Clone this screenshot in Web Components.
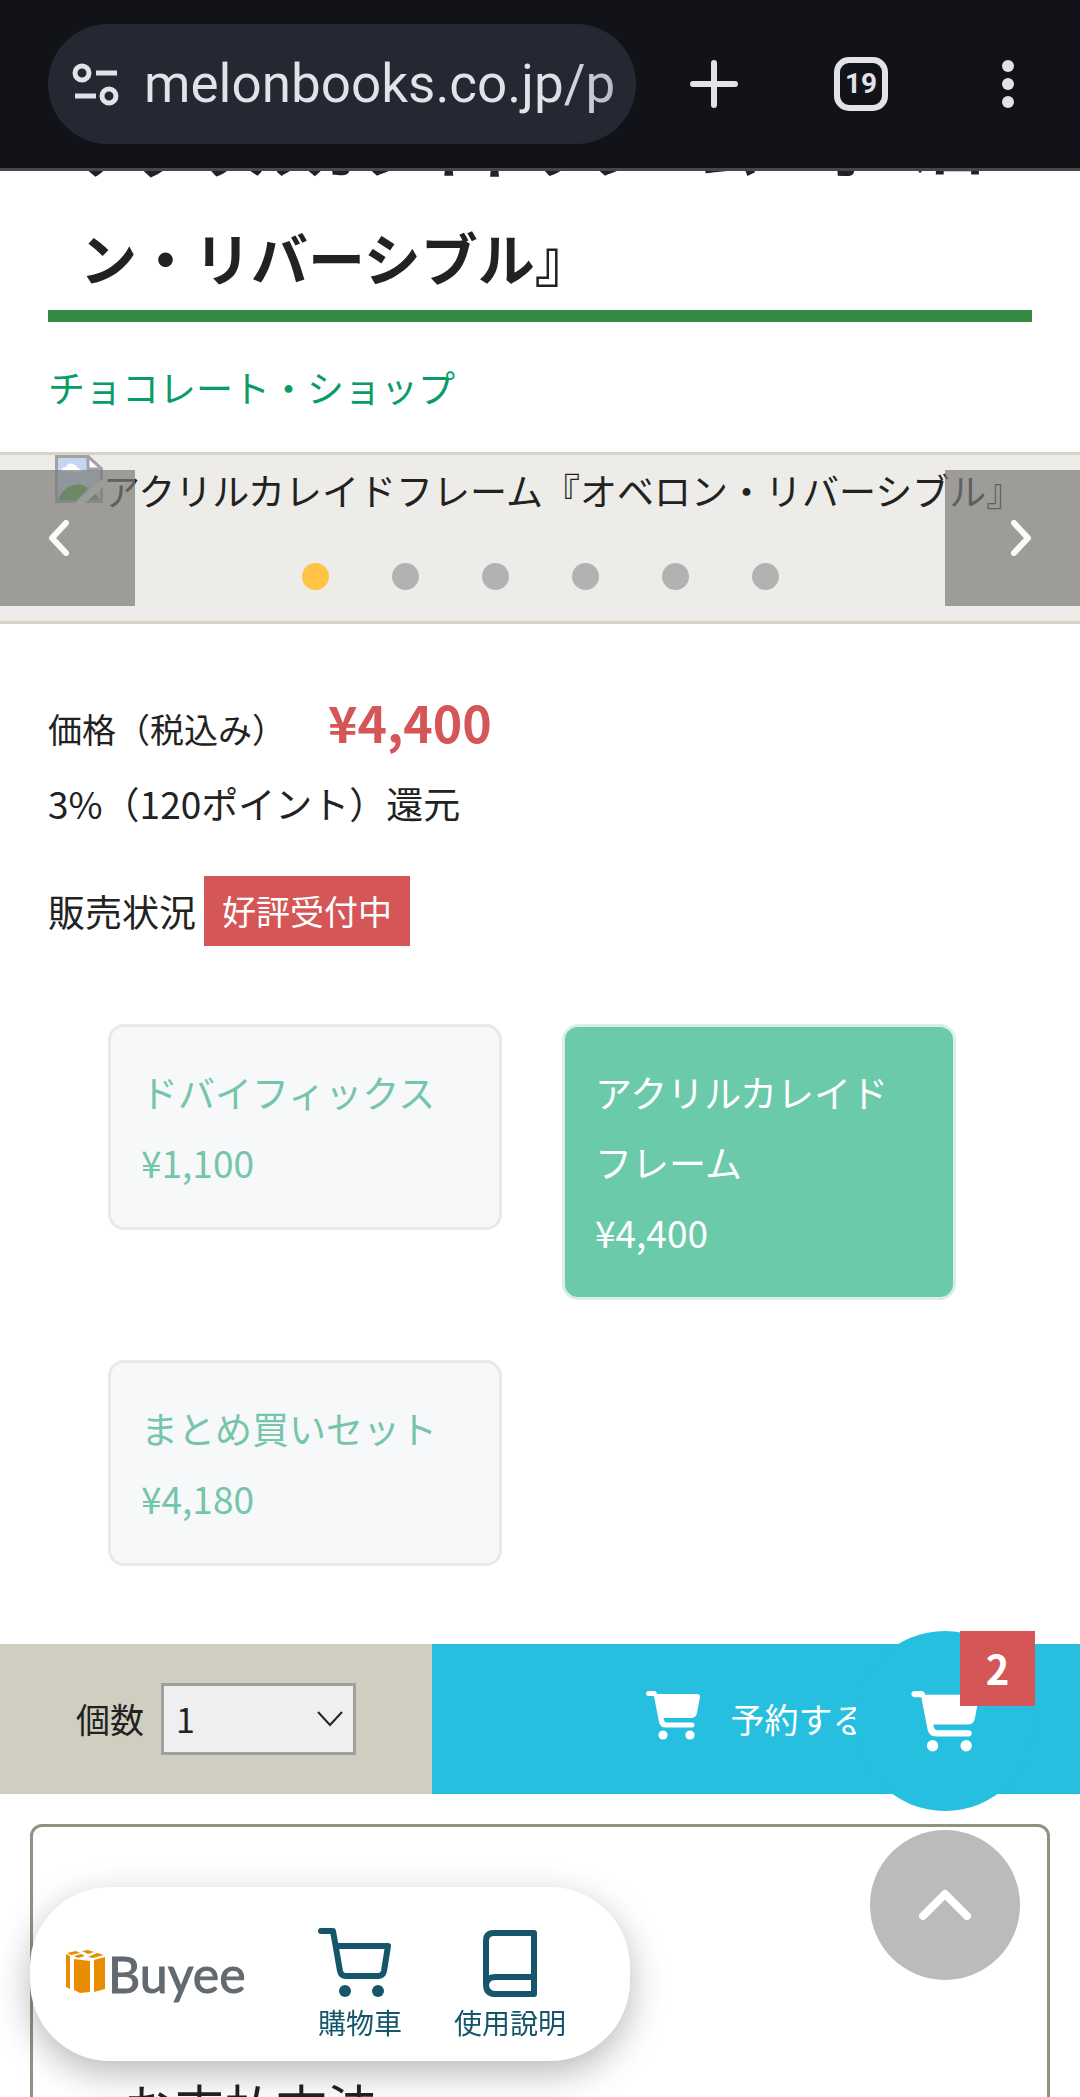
<!DOCTYPE html>
<html lang="ja">
<head>
<meta charset="utf-8">
<meta name="viewport" content="width=device-width, initial-scale=1">
<title>アクリルカレイドフレーム『オベロン・リバーシブル』</title>
<style>
  html, body { margin: 0; height: 100%; }
  body {
    overflow: hidden;
    background: #fff;
    color: #222;
    font: 37px/70px "Noto Sans CJK JP", sans-serif;
  }
</style>
</head>
<body>
<shop-page></shop-page>

<script>
const define = (name, html) => {
  const template = document.createElement('template');
  template.innerHTML = `<style>
    *, *::before, *::after { box-sizing: border-box; }
    :host { display: block; box-sizing: border-box; }
    button, input, select { font: inherit; color: inherit; border: 0; padding: 0; margin: 0; background: none; border-radius: 0; }
    a { color: inherit; text-decoration: none; }
    svg { display: block; flex: none; }
  </style>` + html;
  customElements.define(name, class extends HTMLElement {
    constructor() {
      super();
      this.attachShadow({ mode: 'open' }).append(template.content.cloneNode(true));
    }
  });
};

/* Solid shopping cart, shared by the order button and the floating cart. */
const cartPath = `<path d="M3 0H8Q10.500 0 11 3H51Q54 3 54 6L51 22Q50 27 45 27H17.500L18 29Q18.500 31.500 21 31.500H46Q48.500 31.500 48.500 34T46 36.500H20Q14 36.500 13 31L8 5H3Q0 5 0 2.500T3 0Z"/><circle cx="17" cy="44" r="4.600"/><circle cx="44" cy="44" r="4.600"/>`;

define('browser-bar', `<style>
  :host { position: relative; z-index: 1; background: #121318; border-bottom: 3px solid #45474d; color: #e3e2e9; }
  .bar { display: flex; align-items: center; padding: 24px 36px 24px 48px; }
  .address { flex: 1; min-width: 0; display: flex; align-items: center; gap: 24px; height: 120px; padding: 0 20px 0 24px; border-radius: 60px; background: #242832; }
  input { flex: 1; min-width: 0; width: 0; height: 72px; outline: 0; font: 53px/72px Roboto, "Noto Sans", sans-serif;
    color: transparent; background: linear-gradient(90deg, #e3e2e9 86%, #b9b9c3) text; -webkit-background-clip: text; }
  .tools { display: flex; align-items: center; margin-left: 42px; gap: 75px; }
  button { display: grid; place-items: center; width: 72px; height: 72px; }
  .count { width: 54px; height: 54px; border: 6px solid #e3e2e9; border-radius: 15px; display: grid; place-items: center; font: 700 28px/32px Roboto, sans-serif; }
</style>
<header class="bar">
  <div class="address">
    <svg width="48" height="48" viewBox="0 0 48 48" fill="none" stroke="#e3e2e9" stroke-width="5"><circle cx="10" cy="13" r="7"/><path d="M24 13H45M3 36H24"/><circle cx="37" cy="36" r="7"/></svg>
    <input type="text" aria-label="URL" value="melonbooks.co.jp/p" readonly>
  </div>
  <div class="tools">
    <button aria-label="new tab"><svg width="48" height="48" fill="none" stroke="#e3e2e9" stroke-width="6" stroke-linecap="round"><path d="M24 3V45M3 24H45"/></svg></button>
    <button aria-label="tabs"><span class="count">19</span></button>
    <button aria-label="menu"><svg width="12" height="48" fill="#e3e2e9"><circle cx="6" cy="6" r="6"/><circle cx="6" cy="24" r="6"/><circle cx="6" cy="42" r="6"/></svg></button>
  </div>
</header>`);

define('product-title', `<style>
  :host { padding: 0 48px; margin-top: -77px; }
  h1 { margin: 0; padding: 0 32px; border-bottom: 12px solid #348a43; font-size: 57px; line-height: 108px; font-weight: 700; }
  a { display: block; margin: 30px 0; color: #0a9c67; }
</style>
<h1><slot></slot></h1>
<a href="#circle"><slot name="circle"></slot></a>`);

define('image-carousel', `<style>
  :host { position: relative; background: #edece8; border: solid #d6d4c5; border-width: 3px 0; }
  figure { margin: 0; padding-left: 55px; display: flex; overflow: hidden; white-space: nowrap; height: 108px; }
  .dots { display: flex; justify-content: center; gap: 63px; height: 58px; }
  .dots button { width: 27px; height: 27px; border-radius: 50%; background: #b2b2b2; }
  .dots button[aria-current] { background: #ffc443; }
  .step { position: absolute; top: 15px; width: 135px; height: 136px; background: rgba(122, 122, 120, .7); display: flex; align-items: center; }
  .prev { left: 0; padding-left: 48px; }
  .next { right: 0; justify-content: flex-end; padding-right: 48px; }
</style>
<figure>
  <svg width="48" height="48" viewBox="0 0 48 48"><path d="M1.500 1.500H33L46.500 14V46.500H1.500Z" fill="#c6d5f3" stroke="#a3a3a3" stroke-width="3"/><path d="M6 16Q7 12 11 12Q13 7 18 9Q22 10 22 13Q26 13 26 17Z" fill="#fff"/><path d="M3 45C9 28 27 26 33 34L22 45Z" fill="#4fa83c"/><path d="M32 45L39 37L45 45Z" fill="#4fa83c"/><path d="M20 48L48 24V32L30 48Z" fill="#edece8"/><path d="M33 1.500V14H46.500Z" fill="#fff" stroke="#a3a3a3" stroke-width="3"/></svg>
  <figcaption><slot></slot></figcaption>
</figure>
<div class="dots">
  <button aria-label="1" aria-current="true"></button><button aria-label="2"></button><button aria-label="3"></button><button aria-label="4"></button><button aria-label="5"></button><button aria-label="6"></button>
</div>
<button class="step prev" aria-label="前へ"><svg width="21" height="36" fill="none" stroke="#fbfbf9" stroke-width="6" stroke-linecap="round" stroke-linejoin="round"><path d="M18 3L4 18L18 33"/></svg></button>
<button class="step next" aria-label="次へ"><svg width="21" height="36" fill="none" stroke="#fbfbf9" stroke-width="6" stroke-linecap="round" stroke-linejoin="round"><path d="M3 3L17 18L3 33"/></svg></button>`);

define('price-panel', `<style>
  :host { padding: 58px 48px 0; }
  p { margin: 0; }
  .price { display: flex; align-items: baseline; gap: 42px; margin-bottom: 4px; }
  .label { font-size: 34px; }
  strong { font-size: 50px; line-height: 78px; color: #d45656; }
  .status { display: flex; align-items: center; gap: 8px; margin-top: 38px; }
  .tag { background: #d45656; color: #fff; font-size: 34px; padding: 0 18px; }
</style>
<p class="price"><span class="label">価格（税込み）</span><strong><slot name="price"></slot></strong></p>
<p><slot name="points"></slot></p>
<p class="status"><span>販売状況</span><span class="tag"><slot name="status"></slot></span></p>`);

define('option-list', `<style>
  :host { display: grid; grid-template-columns: 1fr 1fr; align-items: start; gap: 60px; padding: 78px 124px 78px 108px; }
</style><slot></slot>`);

define('product-option', `<style>
  a { display: block; padding: 30px; border: 3px solid #e7e9ea; border-radius: 16px; background: #f6f8fa; color: #75c5ab; }
  :host([selected]) a { background: #6bcaa9; border-color: #dcede7; color: #fff; }
  span { display: block; }
</style>
<a href="#option"><slot></slot><span><slot name="price"></slot></span></a>`);

define('purchase-bar', `<style>
  :host { position: relative; display: flex; height: 150px; font-size: 34px; }
  label { flex: 0 0 40%; display: flex; align-items: center; gap: 17px; padding-left: 76px; background: #cfcec1; }
  .field { display: grid; align-items: center; }
  .field > * { grid-area: 1 / 1; }
  .field svg { justify-self: end; margin-right: 12px; pointer-events: none; }
  select { appearance: none; width: 195px; height: 72px; padding-left: 12px; border: 3px solid #a0a09c; background: #efefef; font-size: 34px; line-height: 50px; }
  .order { flex: 1; display: flex; align-items: center; justify-content: center; gap: 31px; background: #27bfdf; color: #fff; }
  .order svg { margin-bottom: 8px; }
  .cart { position: absolute; right: 45px; top: -13px; width: 180px; height: 180px; border-radius: 50%; background: #27bfdf; display: grid; place-items: center; }
  .badge { position: absolute; top: 0; right: 0; width: 75px; height: 75px; background: #d45656; color: #fff; font-weight: 700; line-height: 75px; text-align: center; font-size: 40px; }
</style>
<label><span>個数</span><span class="field"><select><option>1</option><option>2</option></select><svg width="28" height="16" fill="none" stroke="#222" stroke-width="2"><path d="M2 1L14 14L26 1"/></svg></span></label>
<button class="order"><svg width="54" height="49" viewBox="0 0 54 49" fill="#fff">${cartPath}</svg><span>予約する</span></button>
<a class="cart" href="#cart" aria-label="カート"><svg width="68" height="61" viewBox="0 0 54 49" fill="#fff">${cartPath}</svg><span class="badge">2</span></a>`);

define('info-box', `<style>
  :host { margin: 30px 30px 0; padding: 240px 90px 90px; border: 3px solid #929283; border-radius: 12px; }
  h2 { margin: 0; font-size: 51px; line-height: 78px; font-weight: 400; }
</style><h2><slot></slot></h2>`);

define('scroll-top', `<style>
  :host { position: fixed; right: 60px; bottom: 117px; }
  button { display: grid; place-items: center; width: 150px; height: 150px; border-radius: 50%; background: #bbb; }
</style>
<button aria-label="ページの先頭へ"><svg width="52" height="34" fill="none" stroke="#fff" stroke-width="8" stroke-linecap="round" stroke-linejoin="round"><path d="M4 28L26 6L48 28"/></svg></button>`);

define('buyee-bar', `<style>
  :host { position: fixed; left: 30px; bottom: 36px; width: 600px; height: 174px; padding: 0 64px 0 36px; border-radius: 80px; background: #fff;
    box-shadow: 0 12px 36px rgba(0, 0, 0, .28); display: flex; align-items: center; color: #16566a; font: 28px/40px "Noto Sans CJK TC", sans-serif; }
  .logo { display: flex; align-items: center; gap: 2px; margin-right: auto; font: 50px/56px Lato, sans-serif; color: #626970; -webkit-text-stroke: 1px #626970; }
  .logo svg { margin-bottom: 4px; }
  nav { display: flex; gap: 52px; padding-top: 20px; }
  nav a { display: grid; justify-items: center; gap: 4px; }
</style>
<a class="logo" href="#buyee"><svg width="40" height="44" viewBox="0 0 40 44" fill="#ea8c00"><path d="M0 4L4 6V39L0 37ZM1 3L10 1L14 3L5 5ZM16 1L22 0L28 2L22 4ZM8 6L15 4L19 6L12 8Z"/><path d="M8 9L24 11V42L14 43L8 40ZM28 10L39 7V39L28 42ZM22 7L31 3L38 5L27 8Z"/></svg><span>Buyee</span></a>
<nav>
  <a href="#cart"><svg width="84" height="72" viewBox="0 0 84 72" fill="none" stroke="#16566a" stroke-width="6" stroke-linejoin="round" stroke-linecap="round"><path d="M3 5H15L22 45Q23 50 28 50H60Q65 50 66 45L70 20H18"/><circle cx="27" cy="65" r="6" fill="#16566a" stroke="none"/><circle cx="60" cy="65" r="6" fill="#16566a" stroke="none"/></svg><span>購物車</span></a>
  <a href="#guide"><svg width="54" height="72" viewBox="0 0 54 72" fill="none" stroke="#16566a" stroke-width="6" stroke-linejoin="round"><path d="M51 7H11Q3 7 3 15V58Q3 68 12 68H51ZM51 51H12Q3 51 3 60"/></svg><span>使用說明</span></a>
</nav>`);

define('shop-page', `<browser-bar></browser-bar>
<main>
  <product-title>アクリルカレイドフレーム『オベロン・リバーシブル』<span slot="circle">チョコレート・ショップ</span></product-title>
  <image-carousel>アクリルカレイドフレーム『オベロン・リバーシブル』</image-carousel>
  <price-panel><span slot="price">¥4,400</span><span slot="points">3%（120ポイント）還元</span><span slot="status">好評受付中</span></price-panel>
  <option-list>
    <product-option>ドバイフィックス<span slot="price">¥1,100</span></product-option>
    <product-option selected>アクリルカレイドフレーム<span slot="price">¥4,400</span></product-option>
    <product-option>まとめ買いセット<span slot="price">¥4,180</span></product-option>
  </option-list>
  <purchase-bar></purchase-bar>
  <info-box>お支払方法</info-box>
</main>
<scroll-top></scroll-top>
<buyee-bar></buyee-bar>`);
</script>
</body>
</html>
